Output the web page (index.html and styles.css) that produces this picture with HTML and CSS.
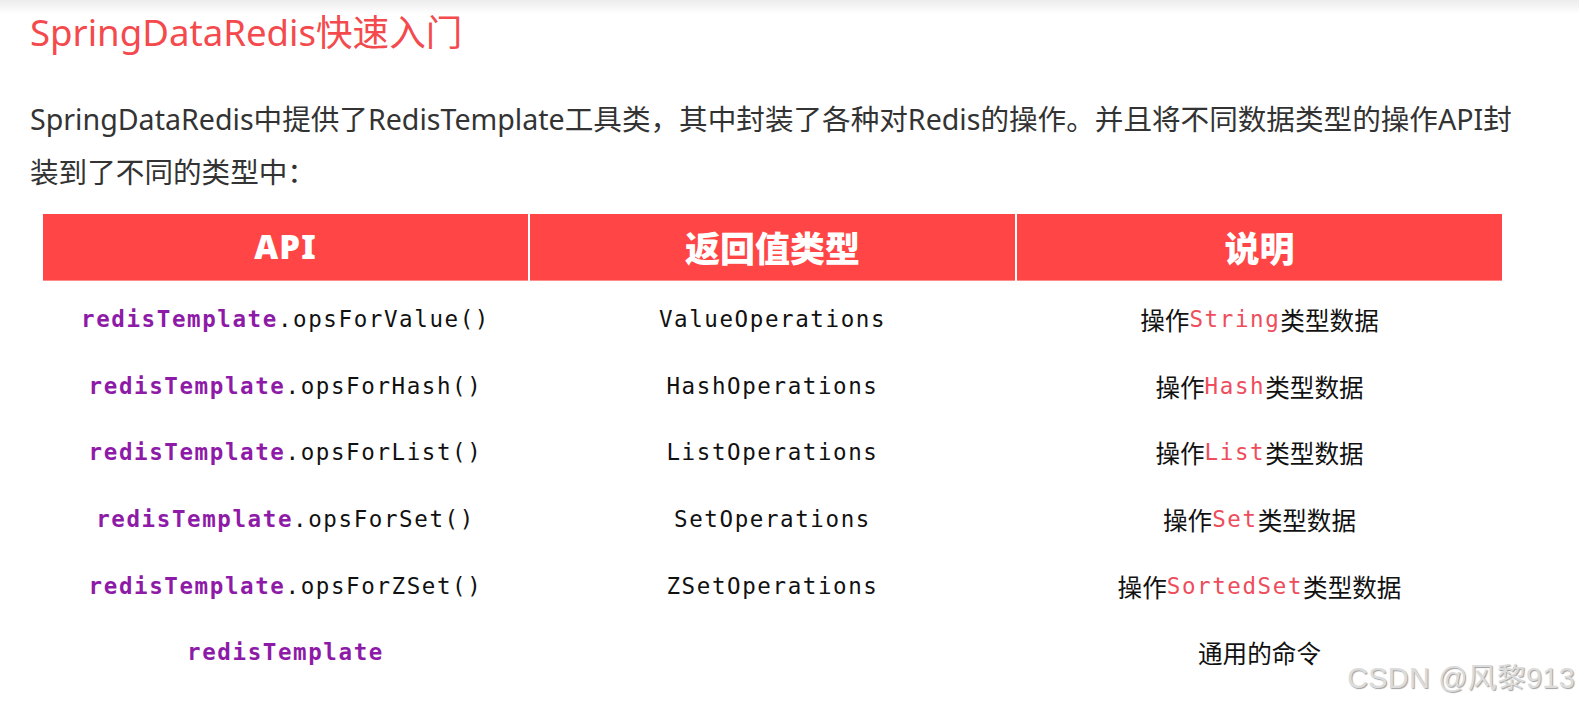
FILE: index.html
```html
<!DOCTYPE html>
<html lang="zh">
<head>
<meta charset="utf-8">
<title>SpringDataRedis快速入门</title>
<link rel="stylesheet" href="styles.css">
</head>
<body>
<div class="topband"></div>
<main class="page">
  <h1 class="title">SpringDataRedis快速入门</h1>
  <p class="intro">SpringDataRedis中提供了RedisTemplate工具类，其中封装了各种对Redis的操作。并且将不同数据类型的操作API封<br>装到了不同的类型中：</p>
  <div class="table">
    <div class="th th-api">API</div>
    <div class="th">返回值类型</div>
    <div class="th">说明</div>

    <div class="td code first"><b class="kw">redisTemplate</b>.opsForValue()</div>
    <div class="td code first">ValueOperations</div>
    <div class="td desc first">操作<span class="hl">String</span>类型数据</div>

    <div class="td code"><b class="kw">redisTemplate</b>.opsForHash()</div>
    <div class="td code">HashOperations</div>
    <div class="td desc">操作<span class="hl">Hash</span>类型数据</div>

    <div class="td code"><b class="kw">redisTemplate</b>.opsForList()</div>
    <div class="td code">ListOperations</div>
    <div class="td desc">操作<span class="hl">List</span>类型数据</div>

    <div class="td code"><b class="kw">redisTemplate</b>.opsForSet()</div>
    <div class="td code">SetOperations</div>
    <div class="td desc">操作<span class="hl">Set</span>类型数据</div>

    <div class="td code"><b class="kw">redisTemplate</b>.opsForZSet()</div>
    <div class="td code">ZSetOperations</div>
    <div class="td desc">操作<span class="hl">SortedSet</span>类型数据</div>

    <div class="td code"><b class="kw">redisTemplate</b></div>
    <div class="td code"></div>
    <div class="td desc">通用的命令</div>
  </div>
</main>
<div class="watermark">CSDN @风黎913</div>
</body>
</html>
```

FILE: styles.css
```css
html, body {
  margin: 0;
  padding: 0;
  background: #ffffff;
}
body {
  position: relative;
  width: 1579px;
  height: 707px;
  overflow: hidden;
  font-family: "Noto Sans", "Noto Sans CJK SC", sans-serif;
}
.topband {
  height: 14px;
  background: linear-gradient(#ececec, #ffffff);
}
.page {
  padding: 0 0 0 30px;
}
.title {
  margin: 0;
  font-size: 36.6px;
  font-weight: 400;
  line-height: 36px;
  color: #f44a4d;
}
.intro {
  margin: 42px 0 0 0;
  white-space: nowrap;
  font-size: 28.6px;
  line-height: 53px;
  color: #333333;
}
.table {
  margin: 16px 0 0 13px;
  width: 1459px;
  display: grid;
  grid-template-columns: 485px 485px 485px;
  column-gap: 2px;
}
.th {
  height: 67px;
  background: #ff4545;
  border-bottom: 1px solid #ff8a8a;
  box-sizing: border-box;
  display: flex;
  align-items: center;
  justify-content: center;
  color: #ffffff;
  font-size: 35px;
  font-weight: 900;
  font-family: "Noto Sans CJK SC", "Noto Sans", sans-serif;
  padding-bottom: 2px;
}
.th-api {
  font-family: "Noto Sans", "Noto Sans CJK SC", sans-serif;
  font-size: 33px;
  letter-spacing: 1px;
}
.td {
  height: 66.6px;
  display: flex;
  align-items: center;
  justify-content: center;
}
.td.first {
  margin-top: 5px;
}
.code {
  font-family: "DejaVu Sans Mono", "Liberation Mono", monospace;
  font-size: 22.5px;
  letter-spacing: 1.6px;
  color: #111111;
}
.kw {
  color: #8e1ba8;
  font-weight: 700;
}
.desc {
  font-family: "Noto Sans CJK SC", sans-serif;
  font-size: 24.6px;
  color: #111111;
}
.hl {
  font-family: "DejaVu Sans Mono", "Liberation Mono", monospace;
  font-size: 22.5px;
  letter-spacing: 1.6px;
  color: #ee4d5c;
}
.watermark {
  position: absolute;
  right: 4px;
  bottom: 11px;
  font-family: "Liberation Sans", "Noto Sans CJK SC", sans-serif;
  font-size: 28.8px;
  color: #dcdcdc;
  text-shadow: 1px 1px 1px #a0a0a0;
  letter-spacing: 0.3px;
}
```
